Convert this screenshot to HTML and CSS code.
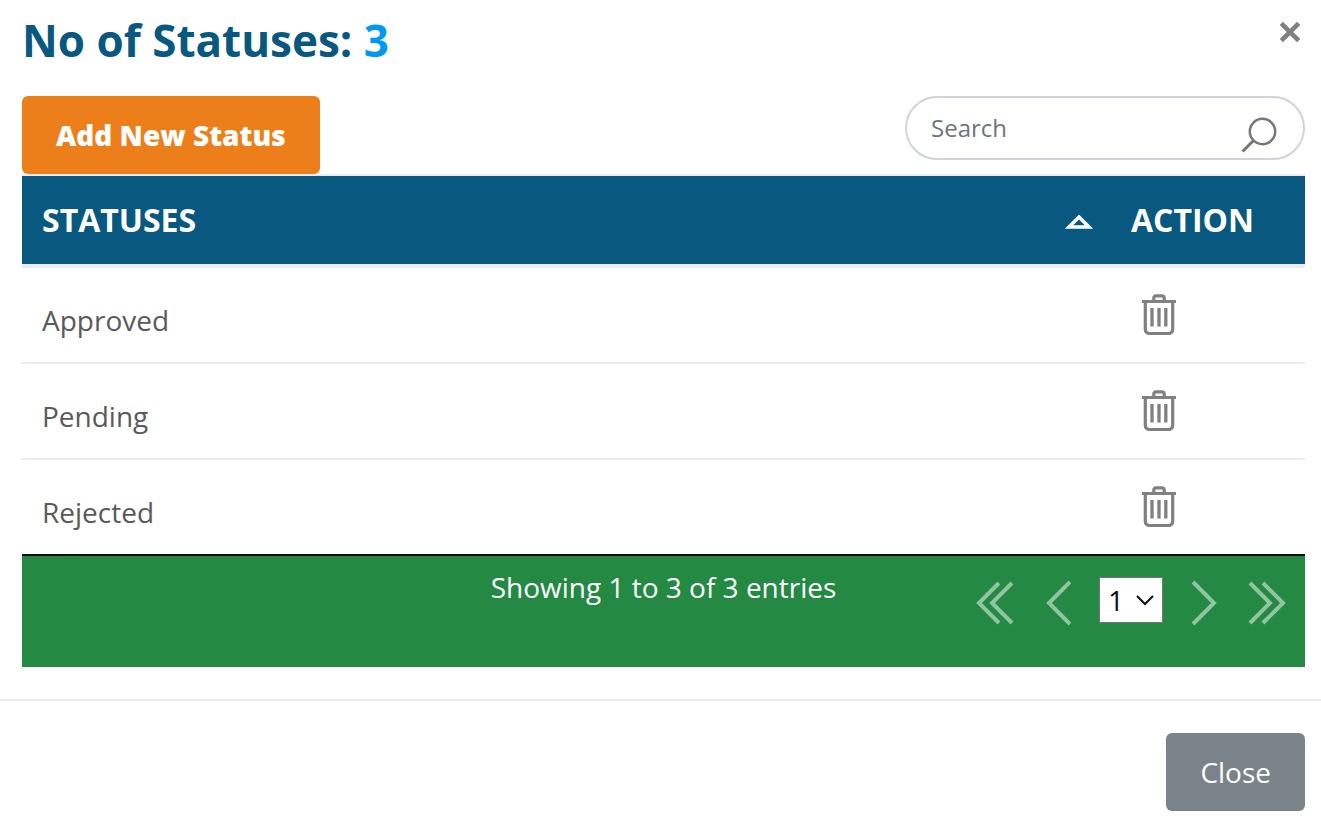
FILE: index.html
```html
<!DOCTYPE html>
<html lang="en">
<head>
    <meta charset="UTF-8">
    <meta name="viewport" content="width=device-width, initial-scale=1.0">
    <title>Statuses</title>
    <link rel="stylesheet" href="styles.css">
</head>
<body>
    <svg class="sprite" aria-hidden="true">
        <symbol id="icon-trash" viewBox="0 0 36 42">
            <path d="M1 7.500h34M12.800 7V4a2.200 2.200 0 0 1 2.200-2.200h6a2.200 2.200 0 0 1 2.200 2.200V7M4.300 8v27.500a4 4 0 0 0 4 4h19.400a4 4 0 0 0 4-4V8" fill="none" stroke="currentColor" stroke-width="3.200"/>
            <path d="M11 14v18.500M18 14v18.500M24.800 14v18.500" fill="none" stroke="currentColor" stroke-width="3.300"/>
        </symbol>
    </svg>

    <div class="modal">
        <header class="modal-header">
            <h1>No of Statuses: <span class="count">3</span></h1>
            <button type="button" class="dismiss" aria-label="Close dialog">
                <svg width="22" height="22" viewBox="0 0 22 22"><path d="M2.300 2.300l17.400 17.400M19.700 2.300L2.300 19.700" stroke="currentColor" stroke-width="4.600"/></svg>
            </button>
        </header>

        <main class="modal-body">
            <div class="toolbar">
                <button type="button" class="btn btn-add">Add New Status</button>
                <div class="search">
                    <input type="text" placeholder="Search" aria-label="Search">
                    <svg class="search-icon" width="38" height="38" viewBox="0 0 38 38"><circle cx="22.500" cy="15.500" r="12.700" fill="none" stroke="currentColor" stroke-width="2.500"/><path d="M13.500 24.500L2.500 35.500" stroke="currentColor" stroke-width="3"/></svg>
                </div>
            </div>

            <table class="status-table">
                <thead>
                    <tr>
                        <th>
                            <div class="sort-head">
                                Statuses
                                <svg width="28" height="14" viewBox="0 0 28 14"><path d="M14 2L24 12H4z" fill="none" stroke="currentColor" stroke-width="3.400"/></svg>
                            </div>
                        </th>
                        <th class="action-col">Action</th>
                    </tr>
                </thead>
                <tbody>
                    <tr>
                        <td>Approved</td>
                        <td class="action"><button type="button" class="delete" aria-label="Delete Approved"><svg><use href="#icon-trash"/></svg></button></td>
                    </tr>
                    <tr>
                        <td>Pending</td>
                        <td class="action"><button type="button" class="delete" aria-label="Delete Pending"><svg><use href="#icon-trash"/></svg></button></td>
                    </tr>
                    <tr>
                        <td>Rejected</td>
                        <td class="action"><button type="button" class="delete" aria-label="Delete Rejected"><svg><use href="#icon-trash"/></svg></button></td>
                    </tr>
                </tbody>
            </table>

            <div class="table-footer">
                <p class="info">Showing 1 to 3 of 3 entries</p>
                <nav class="pager" aria-label="Pages">
                    <button type="button" class="first" aria-label="First page" disabled><svg width="38" height="46" viewBox="0 0 38 46"><path d="M23 3L3 23l20 20M36 3L16 23l20 20"/></svg></button>
                    <button type="button" aria-label="Previous page" disabled><svg width="26" height="46" viewBox="0 0 26 46"><path d="M25 2L4 23l21 21"/></svg></button>
                    <div class="page-select">
                        <select aria-label="Page"><option>1</option></select>
                        <svg width="18" height="12" viewBox="0 0 18 12"><path d="M1 2l8 8 8-8"/></svg>
                    </div>
                    <button type="button" aria-label="Next page" disabled><svg width="26" height="46" viewBox="0 0 26 46"><path d="M2 2l21 21L2 44"/></svg></button>
                    <button type="button" class="last" aria-label="Last page" disabled><svg width="38" height="46" viewBox="0 0 38 46"><path d="M2 3l20 20L2 43M15 3l20 20-20 20"/></svg></button>
                </nav>
            </div>
        </main>

        <footer class="modal-footer">
            <button type="button" class="btn btn-close">Close</button>
        </footer>
    </div>
</body>
</html>
```
FILE: styles.css
```css
* {
    box-sizing: border-box;
    margin: 0;
    padding: 0;
}

body {
    font-family: "Open Sans", sans-serif;
    font-size: 28px;
    color: #5a5a5a;
    background-color: #fff;
}

button,
input,
select {
    font-family: inherit;
}

button {
    border: none;
    background: none;
    cursor: pointer;
}

svg {
    display: block;
}

.sprite {
    position: absolute;
    width: 0;
    height: 0;
}

/* header */
.modal-header {
    display: flex;
    justify-content: space-between;
    align-items: flex-start;
    padding: 8px 20px 24px 22px;
}

.modal-header h1 {
    font-size: 44px;
    line-height: 64px;
    font-weight: 700;
    color: #085880;
}

.modal-header .count {
    color: #0099f0;
}

.dismiss {
    margin-top: 13px;
    color: #808080;
}

/* body */
.modal-body {
    padding: 0 16px 32px 22px;
}

.toolbar {
    display: flex;
    justify-content: space-between;
    align-items: flex-start;
}

.btn {
    height: 78px;
    padding: 0 34px;
    border-radius: 6px;
    font-size: 28px;
    color: #fff;
}

.btn-add {
    background-color: #ed7f1b;
    font-weight: 800;
}

.btn-close {
    background-color: #7b838a;
}

.search {
    position: relative;
    width: 400px;
}

.search input {
    width: 100%;
    height: 64px;
    padding: 0 72px 2px 24px;
    border: 2px solid #ced4da;
    border-radius: 32px;
    font-size: 24px;
    color: #555;
}

.search input::placeholder {
    color: #6c757d;
}

.search-icon {
    position: absolute;
    top: 20px;
    right: 27px;
    color: #777;
}

/* table */
.status-table {
    width: 100%;
    border-spacing: 0;
    border-top: 2px solid #ebebf1;
    border-bottom: 2px solid #111;
}

.status-table th {
    height: 92px;
    padding: 0 20px 2px;
    border-bottom: 4px solid #ebebf1;
    background-color: #085880;
    background-clip: padding-box;
    color: #fff;
    font-size: 32px;
    font-weight: 700;
    text-align: left;
    text-transform: uppercase;
}

.sort-head {
    display: flex;
    justify-content: space-between;
    align-items: center;
}

.sort-head svg {
    margin: 6px -2px 0 0;
}

.action-col {
    width: 194px;
}

.status-table td {
    height: 96px;
    padding: 10px 20px 0;
    border-bottom: 2px solid #ebebf1;
}

.status-table tr:last-child td {
    height: 94px;
    border-bottom: none;
}

.status-table .action {
    padding: 0 30px;
}

.delete {
    display: block;
    color: #808080;
}

.delete svg {
    width: 36px;
    height: 42px;
}

.table-footer {
    display: grid;
    grid-template-columns: 1fr auto 1fr;
    align-items: start;
    min-height: 111px;
    padding: 11px 19px;
    background-color: #238943;
    color: #fff;
}

.info {
    grid-column: 2;
    line-height: 40px;
}

.pager {
    display: flex;
    justify-content: flex-end;
    align-items: flex-start;
    gap: 28px;
    padding-top: 10px;
}

.pager button {
    margin-top: 3px;
    opacity: 0.5;
}

.pager .first {
    margin-right: 3px;
}

.pager .last {
    margin-left: 3px;
}

.pager path {
    fill: none;
    stroke: #fff;
    stroke-width: 4;
}

.page-select {
    position: relative;
}

.page-select select {
    appearance: none;
    width: 64px;
    height: 46px;
    padding-left: 8px;
    border: 1px solid #767676;
    background-color: #fff;
    color: #111;
    font-size: 28px;
}

.page-select svg {
    position: absolute;
    top: 17px;
    right: 9px;
    pointer-events: none;
}

.page-select path {
    stroke: #111;
    stroke-width: 2;
}

/* footer */
.modal-footer {
    display: flex;
    justify-content: flex-end;
    padding: 32px 16px 20px;
    border-top: 2px solid #e9ecef;
}
```
